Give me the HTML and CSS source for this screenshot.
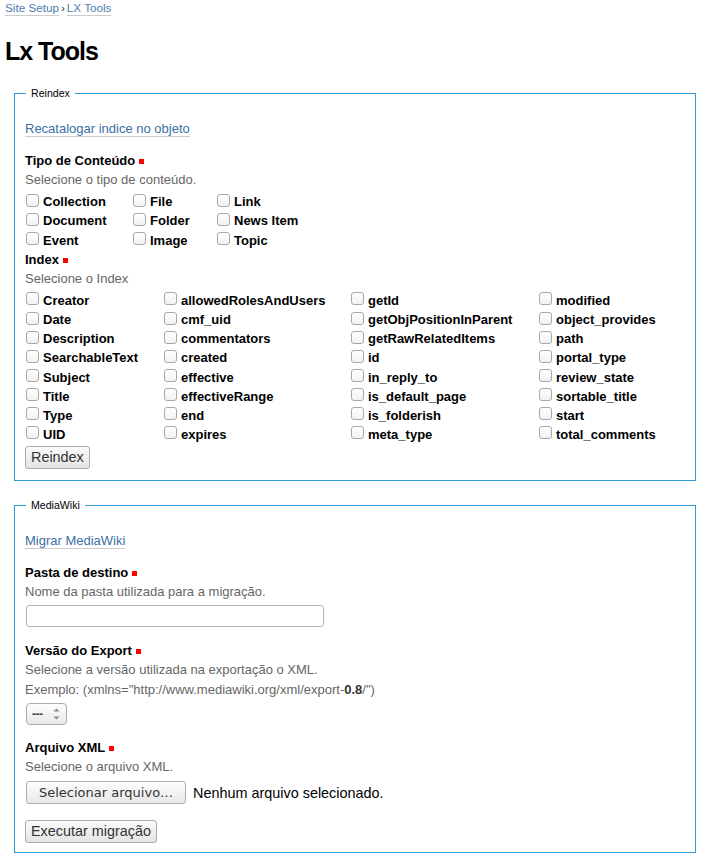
FILE: index.html
```html
<!DOCTYPE html>
<html lang="pt">
<head>
<meta charset="utf-8">
<title>Lx Tools</title>
<link rel="stylesheet" href="styles.css">
</head>
<body>
<nav class="breadcrumbs"><a href="#">Site Setup</a><span class="sep">›</span><a href="#">LX Tools</a></nav>
<h1 class="title">Lx Tools</h1>

<fieldset class="panel panel-reindex">
  <legend>Reindex</legend>
  <p class="action"><a href="#">Recatalogar indice no objeto</a></p>

  <div class="field">
    <div class="field-label">Tipo de Conteúdo<span class="req"></span></div>
    <div class="help">Selecione o tipo de conteúdo.</div>
    <div class="checks checks-types">
      <label class="check"><input type="checkbox"><span>Collection</span></label>
      <label class="check"><input type="checkbox"><span>File</span></label>
      <label class="check"><input type="checkbox"><span>Link</span></label>
      <label class="check"><input type="checkbox"><span>Document</span></label>
      <label class="check"><input type="checkbox"><span>Folder</span></label>
      <label class="check"><input type="checkbox"><span>News Item</span></label>
      <label class="check"><input type="checkbox"><span>Event</span></label>
      <label class="check"><input type="checkbox"><span>Image</span></label>
      <label class="check"><input type="checkbox"><span>Topic</span></label>
    </div>
  </div>

  <div class="field">
    <div class="field-label">Index<span class="req"></span></div>
    <div class="help help-index">Selecione o Index</div>
    <div class="checks checks-index">
      <label class="check"><input type="checkbox"><span>Creator</span></label>
      <label class="check"><input type="checkbox"><span>allowedRolesAndUsers</span></label>
      <label class="check"><input type="checkbox"><span>getId</span></label>
      <label class="check"><input type="checkbox"><span>modified</span></label>
      <label class="check"><input type="checkbox"><span>Date</span></label>
      <label class="check"><input type="checkbox"><span>cmf_uid</span></label>
      <label class="check"><input type="checkbox"><span>getObjPositionInParent</span></label>
      <label class="check"><input type="checkbox"><span>object_provides</span></label>
      <label class="check"><input type="checkbox"><span>Description</span></label>
      <label class="check"><input type="checkbox"><span>commentators</span></label>
      <label class="check"><input type="checkbox"><span>getRawRelatedItems</span></label>
      <label class="check"><input type="checkbox"><span>path</span></label>
      <label class="check"><input type="checkbox"><span>SearchableText</span></label>
      <label class="check"><input type="checkbox"><span>created</span></label>
      <label class="check"><input type="checkbox"><span>id</span></label>
      <label class="check"><input type="checkbox"><span>portal_type</span></label>
      <label class="check"><input type="checkbox"><span>Subject</span></label>
      <label class="check"><input type="checkbox"><span>effective</span></label>
      <label class="check"><input type="checkbox"><span>in_reply_to</span></label>
      <label class="check"><input type="checkbox"><span>review_state</span></label>
      <label class="check"><input type="checkbox"><span>Title</span></label>
      <label class="check"><input type="checkbox"><span>effectiveRange</span></label>
      <label class="check"><input type="checkbox"><span>is_default_page</span></label>
      <label class="check"><input type="checkbox"><span>sortable_title</span></label>
      <label class="check"><input type="checkbox"><span>Type</span></label>
      <label class="check"><input type="checkbox"><span>end</span></label>
      <label class="check"><input type="checkbox"><span>is_folderish</span></label>
      <label class="check"><input type="checkbox"><span>start</span></label>
      <label class="check"><input type="checkbox"><span>UID</span></label>
      <label class="check"><input type="checkbox"><span>expires</span></label>
      <label class="check"><input type="checkbox"><span>meta_type</span></label>
      <label class="check"><input type="checkbox"><span>total_comments</span></label>
    </div>
  </div>

  <button class="btn btn-reindex" type="button">Reindex</button>
</fieldset>

<fieldset class="panel panel-wiki">
  <legend>MediaWiki</legend>
  <p class="action"><a href="#">Migrar MediaWiki</a></p>

  <div class="field field-folder">
    <div class="field-label">Pasta de destino<span class="req"></span></div>
    <div class="help">Nome da pasta utilizada para a migração.</div>
    <input class="text-input" type="text">
  </div>

  <div class="field field-version">
    <div class="field-label">Versão do Export<span class="req"></span></div>
    <div class="help">Selecione a versão utilizada na exportação o XML.</div>
    <div class="help">Exemplo: (xmlns="http://www.mediawiki.org/xml/export-<b>0.8</b>/")</div>
    <span class="fake-select"><span class="sel-value">---</span><svg class="sel-arrows" width="7" height="14" viewBox="0 0 7 14"><path d="M0.5 4.5 L3.5 1.5 L6.5 4.5 Z" fill="#8a8a8a"/><path d="M0.5 9.5 L3.5 12.5 L6.5 9.5 Z" fill="#8a8a8a"/></svg></span>
  </div>

  <div class="field field-file">
    <div class="field-label">Arquivo XML<span class="req"></span></div>
    <div class="help">Selecione o arquivo XML.</div>
    <div class="file-row"><button class="file-btn" type="button">Selecionar arquivo…</button><span class="file-name">Nenhum arquivo selecionado.</span></div>
  </div>

  <button class="btn btn-run" type="button">Executar migração</button>
</fieldset>
</body>
</html>
```

FILE: styles.css
```css
html, body {
  background: #fff;
}
body {
  margin: 0;
  padding: 0 5px 20px;
  font-family: "Liberation Sans", Arial, sans-serif;
  font-size: 13px;
  color: #000;
}
a {
  color: #3c6fa5;
  text-decoration: none;
  border-bottom: 1px solid #cccccc;
}
.breadcrumbs {
  padding-top: 1px;
  font-size: 11.7px;
  line-height: 14px;
  color: #333;
}
.breadcrumbs a {
  display: inline-block;
  line-height: 14px;
  color: #4d7eae;
}
.breadcrumbs .sep {
  margin: 0 2px 0 2px;
  font-size: 11.7px;
}
.title {
  margin: 20px 0 0;
  font-size: 25px;
  line-height: 30px;
  font-weight: bold;
  letter-spacing: -1px;
}
.panel {
  margin: 21px 6px 0 9px;
  padding: 0 10px 11px;
  border: 1px solid #2e9bd6;
  min-width: 0;
}
.panel-wiki {
  margin-top: 18px;
  padding-bottom: 9px;
}
.panel legend {
  margin-left: 1px;
  padding: 0 5px;
  font-size: 10.6px;
  line-height: 13px;
  color: #000;
}
.action {
  margin: 19px 0 0;
  line-height: 19px;
}
.field {
  margin-top: 13px;
}
.field + .field {
  margin-top: 0;
}
.field-label {
  font-weight: bold;
  line-height: 19px;
}
.req {
  display: inline-block;
  width: 5px;
  height: 5px;
  background: #ff0000;
  margin-left: 4px;
  vertical-align: 1px;
}
.help {
  color: #666;
  line-height: 20px;
}
.help b {
  color: #333;
}
.checks {
  display: grid;
  margin-top: 2px;
}
.checks-types {
  grid-template-columns: 107px 84px 1fr;
  grid-auto-rows: 19.3px;
}
.checks-index {
  grid-template-columns: 138px 187px 188px 1fr;
  grid-auto-rows: 19.15px;
}
.check {
  display: flex;
  align-items: center;
  font-weight: bold;
  white-space: nowrap;
}
.check input {
  -webkit-appearance: none;
  appearance: none;
  width: 13px;
  height: 13px;
  margin: 0 4px 3px 1px;
  border: 1px solid #a8a8a8;
  border-radius: 3px;
  background: linear-gradient(#ffffff, #f2f2f2);
  flex: none;
}
.btn {
  display: block;
  margin-top: 2px;
  height: 23px;
  padding: 0 5px;
  font-family: "Liberation Sans", Arial, sans-serif;
  font-size: 14.4px;
  line-height: 21px;
  color: #333;
  border: 1px solid #ababab;
  border-radius: 3px;
  background: linear-gradient(#fbfbfb, #e4e4e4);
}
.btn-run {
  margin-top: 16px;
}
.field-folder {
  margin-top: 13px;
}
.text-input {
  display: block;
  box-sizing: border-box;
  width: 298px;
  height: 22px;
  margin: 3px 0 0 1px;
  border: 1px solid #b5b5b5;
  border-radius: 3px;
  background: #fff;
}
.field-version {
  margin-top: 14px !important;
}
.fake-select {
  display: inline-flex;
  align-items: center;
  box-sizing: border-box;
  width: 41px;
  height: 22px;
  margin: 3px 0 0 1px;
  padding: 0 6px 0 5px;
  border: 1px solid #acacac;
  border-radius: 4px;
  background: linear-gradient(#fdfdfd, #e9e9e9);
  justify-content: space-between;
}
.sel-value {
  font-size: 12px;
  font-weight: bold;
  color: #444;
  letter-spacing: -0.5px;
}
.sel-arrows {
  display: block;
}
.field-file {
  margin-top: 13px !important;
}
.file-row {
  display: flex;
  align-items: center;
  margin-top: 4px;
}
.file-btn {
  box-sizing: border-box;
  height: 23px;
  margin-left: 1px;
  padding: 0 12px;
  font-family: "DejaVu Sans", sans-serif;
  font-size: 13px;
  color: #333;
  border: 1px solid #b0b0b0;
  border-radius: 3px;
  background: linear-gradient(#fdfdfd, #e8e8e8);
}
.file-name {
  margin-left: 7px;
  font-size: 14.4px;
  color: #000;
}
```
